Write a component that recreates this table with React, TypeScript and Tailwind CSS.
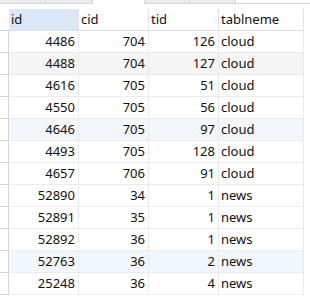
const rows: [number, number, number, string][] = [
  [4486, 704, 126, "cloud"],
  [4488, 704, 127, "cloud"],
  [4616, 705, 51, "cloud"],
  [4550, 705, 56, "cloud"],
  [4646, 705, 97, "cloud"],
  [4493, 705, 128, "cloud"],
  [4657, 706, 91, "cloud"],
  [52890, 34, 1, "news"],
  [52891, 35, 1, "news"],
  [52892, 36, 1, "news"],
  [52763, 36, 2, "news"],
  [25248, 36, 4, "news"],
];

// rows tinted in the grid: one grey, the others pale blue
const rowBg = (i: number) =>
  i === 1 ? "bg-[#f5f5f5]" : i === 4 || i === 10 ? "bg-[#f2f7fd]" : "bg-white";

export default function App() {
  return (
    <div
      className="h-[298px] w-[310px] overflow-hidden bg-white text-[13px] text-[#111]"
      style={{ fontFamily: '"Noto Sans", "Noto Sans CJK SC", sans-serif' }}
    >
      {/* cut-off toolbar above the grid */}
      <div className="flex h-[4px]">
        <div className="w-[46px] border-b border-r border-[#d4d4d4] bg-[#ececec]" />
        <div className="w-[47px] border-b border-r border-[#d4d4d4] bg-[#ececec]" />
        <div className="w-[51px]" />
        <div className="w-[46px] border-b border-l border-r border-[#d4d4d4] bg-[#ececec]" />
        <div className="w-[46px] border-b border-r border-[#d4d4d4] bg-[#ececec]" />
        <div className="flex-1 border-b border-[#d4d4d4]" />
      </div>

      <div className="mt-[5px]">
        <div className="flex h-[22px] leading-[21px]">
          <div className="w-[9px] border-b border-[#d4d4d4]" />
          <div className="w-[70px] border-b border-r border-[#e2e2e2] bg-[#dae8f8] pl-[2px]">id</div>
          <div className="w-[70px] border-b border-r border-[#e2e2e2] pl-[2px]">cid</div>
          <div className="w-[70px] border-b border-r border-[#e2e2e2] pl-[2px]">tid</div>
          <div className="w-[85px] border-b border-r border-[#e2e2e2] pl-[2px]">tablneme</div>
        </div>

        {rows.map(([id, cid, tid, name], i) => (
          <div key={id} className="flex h-[22px] leading-[21px]">
            <div className="w-[9px] border-b border-r border-[#d4d4d4]" />
            <div className={`w-[70px] border-b border-r border-[#ebebeb] pr-[3px] text-right ${rowBg(i)}`}>{id}</div>
            <div className={`w-[70px] border-b border-r border-[#ebebeb] pr-[3px] text-right ${rowBg(i)}`}>{cid}</div>
            <div className={`w-[70px] border-b border-r border-[#ebebeb] pr-[3px] text-right ${rowBg(i)}`}>{tid}</div>
            <div className={`w-[85px] border-b border-r border-[#ebebeb] pl-[2px] ${rowBg(i)}`}>{name}</div>
          </div>
        ))}
      </div>
    </div>
  );
}
